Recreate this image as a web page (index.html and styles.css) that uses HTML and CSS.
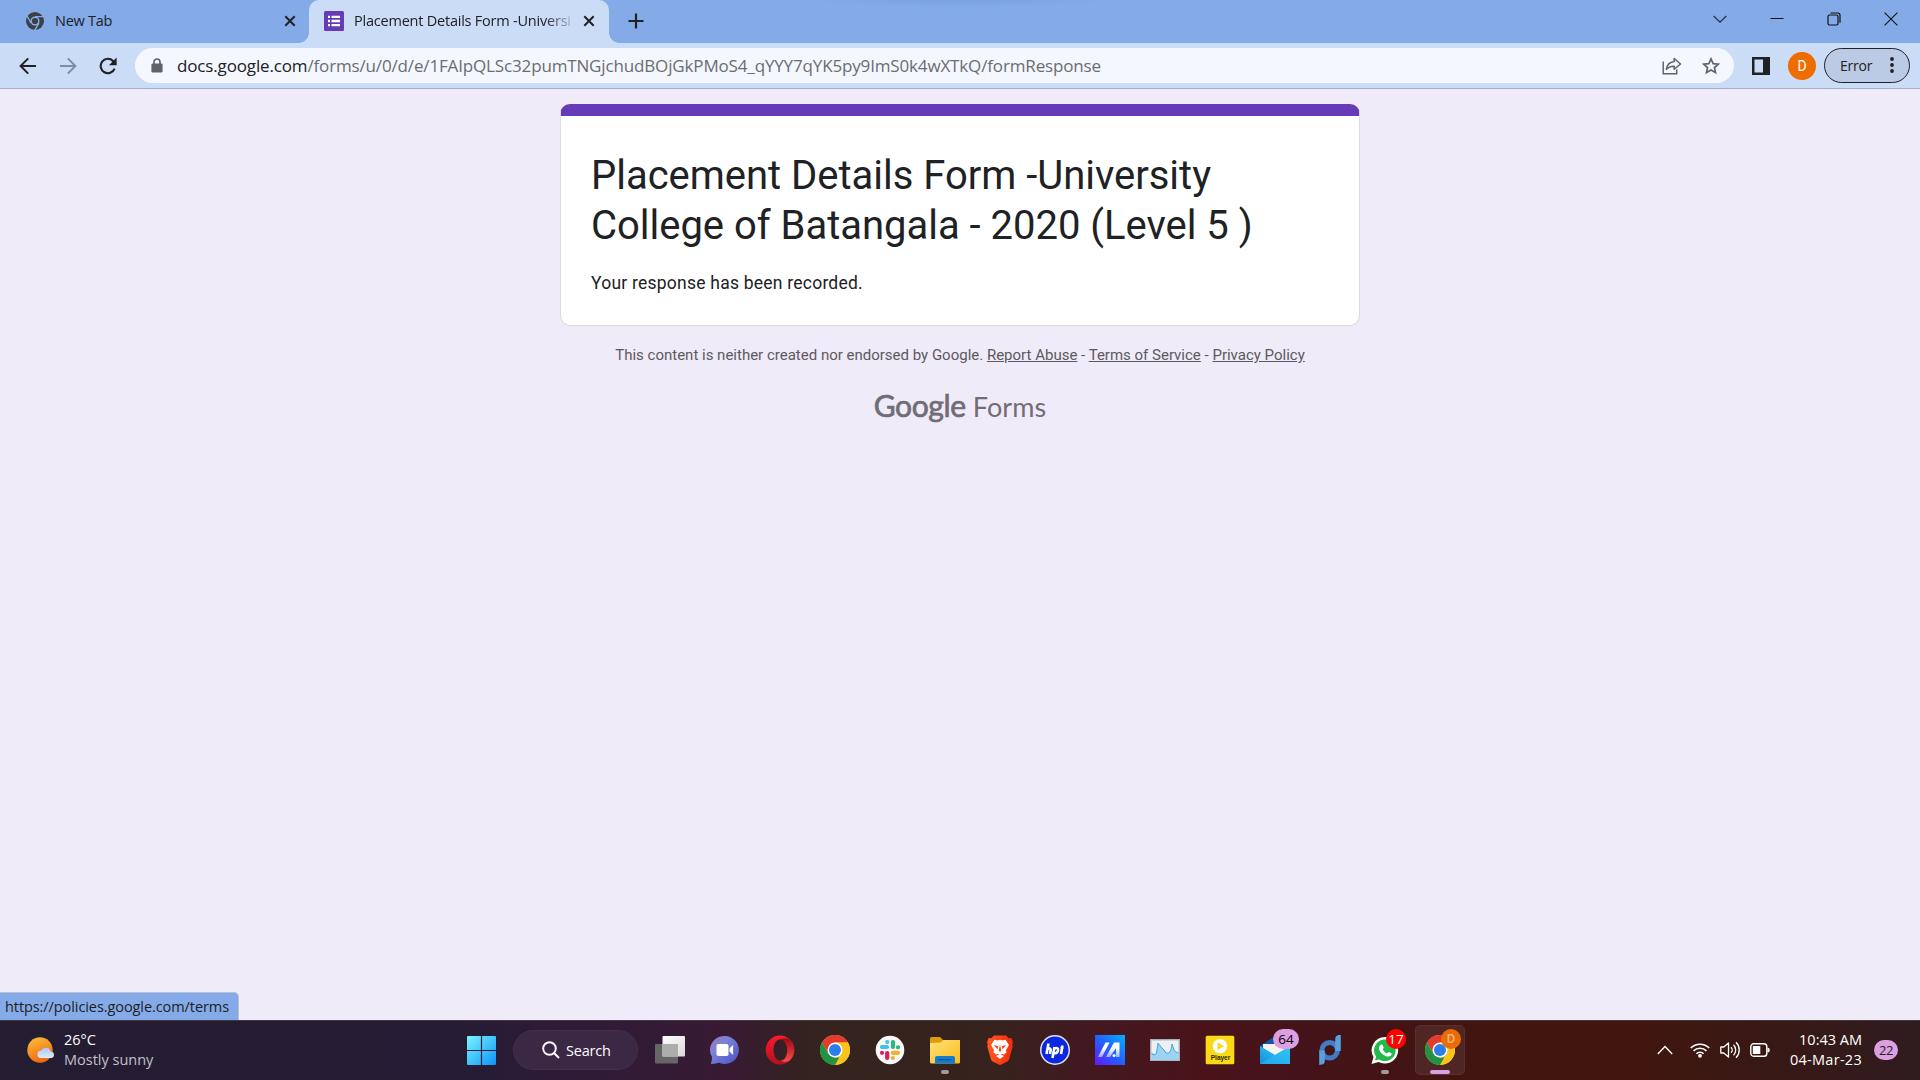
FILE: index.html
```html
<!DOCTYPE html>
<html lang="en">
<head>
<meta charset="utf-8">
<title>Placement Details Form -University College of Batangala - 2020 (Level 5 )</title>
<link rel="stylesheet" href="styles.css">
</head>
<body>
<div class="screen">
  <header class="tabstrip">
    <div class="tab tab-idle">
      <svg class="favicon" viewBox="0 0 20 20"><circle cx="10" cy="10" r="9" fill="#3c4043"/><circle cx="10" cy="10" r="4.6" fill="#84abe8"/><circle cx="10" cy="10" r="3.1" fill="#3c4043"/><path d="M10 5.6h8.3M6.1 12.2L2 5M13.9 12.2L9.6 19.4" stroke="#84abe8" stroke-width="1.4"/></svg>
      <span class="tab-title">New Tab</span>
      <svg class="tab-close" viewBox="0 0 12 12"><path d="M1.3 1.3l9.4 9.4M10.7 1.3L1.3 10.7" stroke="#202124" stroke-width="2"/></svg>
    </div>
    <div class="tab tab-active">
      <svg class="favicon" viewBox="0 0 20 20"><rect width="20" height="20" rx="1.5" fill="#673ab7"/><path d="M4 5.9h2M4 10h2M4 14.1h2M7.5 5.9H16M7.5 10H16M7.5 14.1H16" stroke="#fff" stroke-width="2.4"/></svg>
      <span class="tab-title faded">Placement Details Form -Universi</span>
      <svg class="tab-close" viewBox="0 0 12 12"><path d="M1.3 1.3l9.4 9.4M10.7 1.3L1.3 10.7" stroke="#202124" stroke-width="2"/></svg>
    </div>
    <svg class="new-tab" viewBox="0 0 16 16"><path d="M8 .5v15M.5 8h15" stroke="#202124" stroke-width="2.2"/></svg>
    <div class="window-buttons">
      <svg viewBox="0 0 14 14"><path d="M.7 4l6.3 6.2L13.3 4" fill="none" stroke="#1b2a40" stroke-width="1.1"/></svg>
      <svg viewBox="0 0 14 14"><path d="M.5 6.5h13" stroke="#111" stroke-width="1"/></svg>
      <svg viewBox="0 0 14 14"><rect x="1" y="3" width="10" height="10" rx="1.5" fill="none" stroke="#111" stroke-width="1.2"/><path d="M3.5 1h7.3Q13 1 13 3.2v7.6" fill="none" stroke="#111" stroke-width="1.2"/></svg>
      <svg viewBox="0 0 14 14"><path d="M.6 .6l12.8 12.8M13.4 .6L.6 13.4" stroke="#111" stroke-width="1.1"/></svg>
    </div>
  </header>

  <div class="toolbar">
    <div class="nav">
      <svg viewBox="0 0 18 18"><path d="M17 9H2M9.2 1.4L1.6 9l7.6 7.6" fill="none" stroke="#202124" stroke-width="2"/></svg>
      <svg viewBox="0 0 18 18"><path d="M1 9h15M8.8 1.4L16.4 9l-7.6 7.6" fill="none" stroke="#7d8da9" stroke-width="2"/></svg>
      <svg viewBox="0 0 18 18"><path d="M15.6 11.6A7.2 7.2 0 1 1 14 3.9l2 2" fill="none" stroke="#202124" stroke-width="2.1"/><path d="M17.6 .6v7.6H10z" fill="#202124"/></svg>
    </div>
    <div class="omnibox">
      <svg class="lock" viewBox="0 0 12 15"><path d="M3 6V4a3 3 0 0 1 6 0v2" fill="none" stroke="#5f6368" stroke-width="1.7"/><rect x=".4" y="5.4" width="11.2" height="9.2" rx="1.4" fill="#5f6368"/></svg>
      <span class="url">docs.google.com<span class="path">/forms/u/0/d/e/1FAIpQLSc32pumTNGjchudBOjGkPMoS4_qYYY7qYK5py9ImS0k4wXTkQ/formResponse</span></span>
      <svg class="share" viewBox="0 0 20 18"><path d="M1.2 4.5V16.7H14.7V12.5" fill="none" stroke="#5f6368" stroke-width="1.5"/><path d="M12.2 1.5L18.5 7l-6.3 5.3V9.2C8.7 9.1 6.2 10 4.4 12.4 4.9 8.2 7.6 5.2 12.2 4.6z" fill="none" stroke="#5f6368" stroke-width="1.5" stroke-linejoin="round"/></svg>
      <svg class="star" viewBox="0 0 18 18"><path d="M9 1.900l2.150 4.700 5.100.55-3.800 3.450 1.050 5.050L9 13.100l-4.500 2.550 1.050-5.050-3.800-3.450 5.100-.55z" fill="none" stroke="#5f6368" stroke-width="1.7"/></svg>
    </div>
    <svg class="panel-icon" viewBox="0 0 18 18"><path d="M0 0h18v18H0zM2.500 2.500v13h8.500v-13z" fill="#202124" fill-rule="evenodd"/></svg>
    <span class="avatar">D</span>
    <div class="error-chip"><span>Error</span><svg viewBox="0 0 4 16"><circle cx="2" cy="2" r="1.9"/><circle cx="2" cy="8" r="1.9"/><circle cx="2" cy="14" r="1.9"/></svg></div>
  </div>

  <main class="page">
    <section class="card">
      <h1>Placement Details Form -University<br>College of Batangala - 2020 (Level 5 )</h1>
      <p>Your response has been recorded.</p>
    </section>
    <div class="disclaimer">This content is neither created nor endorsed by Google. <a>Report Abuse</a> - <a>Terms of Service</a> - <a>Privacy Policy</a></div>
    <div class="brand"><span class="brand-google">Google</span><span class="brand-forms">Forms</span></div>
    <div class="link-status">https://policies.google.com/terms</div>
  </main>

  <footer class="taskbar">
    <div class="weather">
      <svg viewBox="0 0 28 26"><defs><linearGradient id="sun" x1="0" y1="0" x2=".4" y2="1"><stop offset="0" stop-color="#fcc23c"/><stop offset="1" stop-color="#f06a12"/></linearGradient><linearGradient id="cloud" x1="0" y1="0" x2="0" y2="1"><stop offset="0" stop-color="#a9cbf3"/><stop offset="1" stop-color="#dce9fa"/></linearGradient></defs><circle cx="13" cy="13" r="12.700" fill="url(#sun)"/><path d="M14 21a3.700 3.700 0 0 1 .3-7.400A5 5 0 0 1 23.600 14.500 3.300 3.300 0 0 1 24.500 21z" fill="url(#cloud)"/></svg>
      <div class="weather-text"><span>26°C</span><span class="weather-sub">Mostly sunny</span></div>
    </div>
    <div class="apps">
      <svg class="start" viewBox="0 0 29 29"><defs><linearGradient id="win" x1="0" y1="0" x2="1" y2="1"><stop offset="0" stop-color="#7df4ff"/><stop offset="1" stop-color="#0a93f8"/></linearGradient></defs><path d="M0 1Q0 0 1 0h12.900v13.900H0zM15.100 0H28q1 0 1 1v12.900H15.100zM0 15.100h13.900V29H1q-1 0-1-1zM15.100 15.100H29V28q0 1-1 1H15.100z" fill="url(#win)"/></svg>
      <div class="search"><svg viewBox="0 0 18 18"><circle cx="7.500" cy="7.500" r="6.300" fill="none" stroke="#fff" stroke-width="1.900"/><path d="M12 12l5 5" stroke="#fff" stroke-width="2"/></svg><span>Search</span></div>
      <div class="app"><svg viewBox="0 0 30 30"><defs><linearGradient id="tv" x1="0" y1="0" x2="1" y2="1"><stop offset="0" stop-color="#fff"/><stop offset="1" stop-color="#d9d9d9"/></linearGradient></defs><rect y="9" width="23" height="19.500" rx="1" fill="#666"/><rect x="7.500" y="1" width="22.500" height="20.500" rx="1" fill="url(#tv)"/><path d="M7.500 9H23v12.500H7.500z" fill="#adadad"/></svg></div>
      <div class="app"><svg viewBox="0 0 30 30"><defs><linearGradient id="chat" x1="0" y1="0" x2="1" y2="1"><stop offset="0" stop-color="#a272b8"/><stop offset=".35" stop-color="#7a83d6"/><stop offset="1" stop-color="#4a4fc4"/></linearGradient></defs><path d="M15 1a14 14 0 1 1-6 26.700Q5 29 .8 29q1.200-3 1.200-7A14 14 0 0 1 15 1z" fill="url(#chat)"/><rect x="6.500" y="9" width="12" height="12" rx="1.800" fill="#fff"/><path d="M19.600 13.200l3.500-3.200v10l-3.500-3.200z" fill="#fff"/></svg></div>
      <div class="app"><svg viewBox="0 0 30 30"><defs><linearGradient id="op" x1="0" y1="0" x2="0" y2="1"><stop offset="0" stop-color="#ff1b2d"/><stop offset="1" stop-color="#b30f1e"/></linearGradient><linearGradient id="op2" x1="0" y1="0" x2="0" y2="1"><stop offset="0" stop-color="#9c0813"/><stop offset="1" stop-color="#ff4b4b"/></linearGradient></defs><path d="M15 .5a14.300 14.500 0 1 0 0 29 14.300 14.500 0 1 0 0-29zM15.500 4.200c4 0 6.800 4.700 6.800 10.800s-2.800 10.800-6.800 10.800S8.500 21.100 8.500 15s3-10.800 7-10.800z" fill="url(#op)" fill-rule="evenodd"/><path d="M15.500 4.200c4-1.800 7-1 9.200.2a14.300 14.500 0 0 1 0 21.200c-2.700 1.700-6 1.800-9.200.2 4 0 6.800-4.700 6.800-10.800S19.500 4.200 15.500 4.200z" fill="url(#op2)"/></svg></div>
      <div class="app"><svg viewBox="0 0 30 30"><g id="chrome"><circle cx="15" cy="15" r="15" fill="#fcc31e"/><path d="M2 7.500A15 15 0 0 1 28 7.500H15L8.500 18.800z" fill="#e33b2e"/><path d="M2 7.500l6.500 11.300L15 22.500h6.500L15 30A15 15 0 0 1 2 7.500z" fill="#229342"/><path d="M21.500 18.800L15 30a15 15 0 0 0 13-22.500H15z" fill="#fcc31e"/><circle cx="15" cy="15" r="7.500" fill="#fff"/><circle cx="15" cy="15" r="6" fill="#2b7de9"/></g></svg></div>
      <div class="app"><svg viewBox="0 0 30 30"><circle cx="15" cy="15" r="14.300" fill="#f8f8f8"/><g stroke-width="4.200" stroke-linecap="round"><path d="M7 12h5M12.300 7v0" stroke="#36c5f0"/><path d="M18 7v5M23 12.300h0" stroke="#2eb67d"/><path d="M18 17.800h5M17.900 23h0" stroke="#ecb22e"/><path d="M12.200 18v5M7 17.800h0" stroke="#e01e5a"/></g></svg></div>
      <div class="app"><svg viewBox="0 0 30 30"><defs><linearGradient id="fold" x1="0" y1="0" x2="1" y2="1"><stop offset="0" stop-color="#ffe07a"/><stop offset="1" stop-color="#fbbc1a"/></linearGradient></defs><path d="M0 3.500Q0 2 1.500 2H10l3 3v6H0z" fill="#dd9c08"/><path d="M0 8l11-.5 2-2.500h17v22q0 1.500-1.500 1.500h-27Q0 28.500 0 27z" fill="url(#fold)"/><path d="M5 28.500V23q0-2 2-2h16q2 0 2 2v5.500z" fill="#127cd0"/><path d="M8.500 24.700h13" stroke="#0b4f93" stroke-width="1.200"/></svg><i class="running"></i></div>
      <div class="app"><svg viewBox="0 0 30 30"><defs><linearGradient id="br"><stop offset="0" stop-color="#ff5a1f"/><stop offset="1" stop-color="#f8280b"/></linearGradient></defs><path d="M9 .4h12l2.800 2.800 2.500-.3 1.700 4-.7 2.500.4 2-3.700 13q-.4 1.200-1.500 2L15 30l-7.500-3.600q-1.100-.8-1.500-2L2.300 11.400l.4-2L2 6.900l1.700-4 2.500.3z" fill="url(#br)"/><path d="M9.500 4.800l3 .8 2.500-.8 2.500.8 3-.8 3.500 5.200-3 5 .5 2.500-3 2.300-1-1-2.500 1.200-2.500-1.200-1 1-3-2.300.500-2.500-3-5zM11 21l4-2 4 2-4 3z" fill="#fff"/><path d="M8.700 10l4.600 1.300-.8 3zM21.300 10l-4.600 1.300.8 3zM15 9.500l1.300 6-1.300 1.600-1.300-1.600z" fill="#f64a1b"/></svg></div>
      <div class="app"><svg viewBox="0 0 30 30"><circle cx="15" cy="15" r="15" fill="#dfe3f3"/><circle cx="15" cy="15" r="13.500" fill="#0b27e0"/><path d="M8.500 8.500L6.500 19M7.300 14q3.200-1.500 3.400.8L10 19M14.500 12l-2 11M14 13.500q5-1.500 4 2.200-1 3.500-4.600 2.300M22.500 10.500L21 19M20.500 13l3-.5" fill="none" stroke="#fff" stroke-width="2.600" stroke-linejoin="round"/></svg></div>
      <div class="app"><svg viewBox="0 0 30 30"><defs><linearGradient id="ma" x1="0" y1="1" x2="1" y2="0"><stop offset="0" stop-color="#6417ff"/><stop offset=".5" stop-color="#2361ff"/><stop offset="1" stop-color="#00b2ff"/></linearGradient><linearGradient id="ma2" x1="0" y1="1" x2="0" y2="0"><stop offset="0" stop-color="#fff" stop-opacity=".5"/><stop offset=".6" stop-color="#fff"/></linearGradient></defs><path d="M0 0h30v30H0z" fill="url(#ma)"/><path d="M3 22L10.500 7.500h4L7 22zM11 22L19 7.500H24.500V22H21V13L15 22z" fill="url(#ma2)"/><circle cx="19" cy="20.500" r="1.500" fill="#fff"/></svg></div>
      <div class="app"><svg viewBox="0 0 30 30"><rect x=".7" y="4.700" width="28.600" height="20.600" fill="#eef1f4" stroke="#a6aeb8" stroke-width="1.400"/><path d="M1.500 24.500V17l3 2 2-1L8 8l3 4 3 3 2 3 3 0 2-3 1-6 2 6 2 2 2.500 1v7.500z" fill="#9dd3f2"/><path d="M1.500 19l3 1 2-2L8 8l3 4 3 3 2 3 3 0 2-3 1-6 2 6 2 2 2.500 1" fill="none" stroke="#48a5dc"/></svg></div>
      <div class="app"><svg viewBox="0 0 30 30"><rect x=".7" y=".7" width="28.600" height="28.600" rx="1.500" fill="#fbd914"/><circle cx="15" cy="11.200" r="7.200" fill="#fff"/><path d="M12.500 7.300l6.500 3.900-6.500 3.900z" fill="#fbd914"/><text class="player-word" x="15.500" y="25.300" text-anchor="middle">Player</text></svg></div>
      <div class="app"><svg viewBox="0 0 30 30"><defs><linearGradient id="ml" x1="0" y1="1" x2="1" y2="0"><stop offset="0" stop-color="#1490df"/><stop offset="1" stop-color="#35cdf8"/></linearGradient></defs><path d="M0 11L15 1l15 10v7H0z" fill="#0e57a8"/><path d="M3 9h24v6l-12 8-12-8z" fill="#f3f3f3"/><path d="M0 11l15 9 15-9v18H0z" fill="url(#ml)"/><path d="M0 29L30 11v18z" fill="#2eb9f2" opacity=".55"/></svg><b class="badge badge-mail">64</b></div>
      <div class="app"><svg viewBox="0 0 30 30"><circle cx="14.700" cy="15.300" r="7.800" fill="none" stroke="#427cc8" stroke-width="5"/><path d="M4.200 30V15.500h5.600V26q0 3-3 3.600zM25.800 0v16h-5.600V4q0-3 3-4z" fill="#5a9edb"/></svg></div>
      <div class="app"><svg viewBox="0 0 30 30"><path d="M15 2A13.300 13.300 0 1 1 8.500 27L1.500 29l2-7A13.300 13.300 0 0 1 15 2z" fill="#fff"/><path d="M15 4.500A10.800 10.800 0 1 1 9 24.400L5 25.500l1.100-4A10.800 10.800 0 0 1 15 4.500z" fill="#23b94d"/><path d="M11.200 9.500c.8-.3 1.200 0 1.500.7l.9 2.200c.2.500-.9 1.500-1 1.800.9 2 2.400 3.300 4.500 4.200.5-.2 1.300-1.600 1.800-1.400l2.300 1.200c.8.4.2 2-.5 2.600-1.500 1.200-3.400.9-5.300.1-3-1.300-5.200-3.600-6.200-6.200-.7-2 .2-4.400 2-5.200z" fill="#fff"/></svg><b class="badge badge-wa">17</b><i class="running"></i></div>
      <div class="app app-current"><svg viewBox="0 0 30 30"><use href="#chrome"/></svg><b class="badge badge-profile">D</b><i class="running current"></i></div>
    </div>
    <div class="tray">
      <svg class="chev" viewBox="0 0 16 10"><path d="M.8 9L8 1.500 15.200 9" fill="none" stroke="#fff" stroke-width="1.300"/></svg>
      <svg class="wifi" viewBox="0 0 20 16"><g fill="none" stroke="#fff" stroke-width="1.600"><path d="M.8 6a13 13 0 0 1 18.400 0M3.600 8.900a9 9 0 0 1 12.800 0M6.400 11.700a5.100 5.100 0 0 1 7.200 0"/></g><circle cx="10" cy="13.800" r="1.900" fill="#fff"/></svg>
      <svg class="volume" viewBox="0 0 20 18"><g fill="none" stroke="#fff" stroke-width="1.300"><path d="M.8 6v6h3l4.700 4V2L3.800 6z" stroke-linejoin="round"/><path d="M11 6.200a4 4 0 0 1 0 5.600M13.500 3.800a7.300 7.300 0 0 1 0 10.400M16 1.200a11 11 0 0 1 0 15.600"/></g></svg>
      <svg class="battery" viewBox="0 0 20 14"><rect x=".8" y=".8" width="16" height="12.400" rx="2.800" fill="none" stroke="#fff" stroke-width="1.400"/><rect x="2.800" y="3" width="7.500" height="8" fill="#fff"/><path d="M17.500 4.500q2.300 0 2.300 2.500t-2.300 2.500z" fill="#fff"/></svg>
      <div class="clock"><span>10:43 AM</span><span class="date">04-Mar-23</span></div>
      <span class="notif">22</span>
    </div>
  </footer>
</div>
</body>
</html>
```
FILE: styles.css
```css
* { box-sizing: border-box; }
body { margin: 0; }
svg { display: block; flex: none; }
.screen { width: 1920px; height: 1080px; display: flex; flex-direction: column; overflow: hidden; font-family: "Open Sans", "Noto Sans", sans-serif; color: #202124; white-space: nowrap; }

.tabstrip { height: 43px; flex: none; display: flex; background: radial-gradient(ellipse 150px 7px at 960px 0, #79a1dd, #84abe8); }
.tab { display: flex; align-items: center; height: 43px; font-size: 14.5px; letter-spacing: -.27px; }
.tab-idle { width: 309px; padding: 0 13px 2px 25px; }
.tab-active { position: relative; width: 300px; padding: 0 14px 2px 15px; background: #cbdcf7; border-radius: 10px 10px 0 0; }
.tab-active::before, .tab-active::after { content: ""; position: absolute; bottom: 0; width: 10px; height: 10px; }
.tab-active::before { left: -10px; background: radial-gradient(circle at 0 0, transparent 9.5px, #cbdcf7 10px); }
.tab-active::after { right: -10px; background: radial-gradient(circle at 100% 0, transparent 9.5px, #cbdcf7 10px); }
.favicon { width: 20px; height: 20px; margin-right: 10px; }
.faded { font-size: 14.5px; letter-spacing: -.22px; -webkit-mask-image: linear-gradient(90deg, #000 190px, transparent 224px); mask-image: linear-gradient(90deg, #000 190px, transparent 224px); }
.tab-close { width: 12px; height: 12px; margin-left: auto; }
.new-tab { width: 16px; height: 16px; margin: 13px 0 0 19px; }
.window-buttons { display: flex; gap: 43px; margin: 12px 22px 0 auto; }
.window-buttons svg { width: 14px; height: 14px; }

.toolbar { height: 46px; flex: none; display: flex; align-items: center; background: #cbdcf7; border-bottom: 1px solid #a4adc8; padding: 0 10px 0 18px; }
.nav { display: flex; gap: 22px; width: 117px; padding-left: 1px; }
.nav svg { width: 18px; height: 18px; }
.omnibox { display: flex; align-items: center; width: 1599px; height: 35px; border-radius: 18px; background: #f4f7fd; padding: 0 14px 0 16px; font-size: 17px; }
.url { letter-spacing: -.15px; }
.lock { width: 12px; height: 15px; margin-right: 14px; }
.path { color: #6a6d72; }
.share { width: 20px; height: 18px; margin: 0 20px 0 auto; }
.star { width: 18px; height: 18px; }
.panel-icon { width: 18px; height: 18px; margin-left: 18px; }
.avatar { width: 28px; height: 28px; margin-left: 18px; border-radius: 50%; background: #ef6c00; color: #fff; font: 14px/28px Roboto, sans-serif; text-align: center; }
.error-chip { display: flex; align-items: center; justify-content: space-between; width: 86px; height: 35px; margin-left: 8px; padding: 0 15px 1px; border: 1px solid #202124; border-radius: 18px; background: #bccbe5; font-size: 14px; letter-spacing: -.2px; }
.error-chip svg { width: 4px; height: 16px; fill: #202124; }

.page { position: relative; flex: 1; background: #f0ebf8; display: flex; flex-direction: column; align-items: center; padding-top: 15px; font-family: Roboto, sans-serif; }
.card { width: 800px; height: 222px; flex: none; background: #fff; border: 1px solid #dadce0; border-top: 12px solid #673ab7; border-radius: 10px; padding: 35px 30px 0; }
h1 { margin: 0; font-size: 40px; line-height: 50px; font-weight: 400; letter-spacing: -.02px; }
.card p { margin: 20px 0 0; font-size: 17.5px; line-height: 25px; letter-spacing: .23px; }
.disclaimer { margin-top: 20px; font-size: 15px; line-height: 18px; color: #5c5960; }
.disclaimer a { text-decoration: underline; }
.brand { display: flex; align-items: baseline; gap: 7px; margin-top: 23px; color: #706d76; line-height: 36px; }
.brand-google { font: 30px/36px Lato, sans-serif; letter-spacing: -.35px; -webkit-text-stroke: .7px #706d76; }
.brand-forms { font: 27px/36px Lato, sans-serif; letter-spacing: .1px; }
.link-status { position: absolute; left: 0; bottom: 0; width: 239px; height: 28px; padding-left: 5px; border: 1px solid #b9bfd4; border-width: 1px 1px 0 0; border-radius: 0 5px 0 0; background: #84abe8; font: 14.5px/27px "Open Sans", sans-serif; letter-spacing: -.08px; }

.taskbar { height: 60px; flex: none; display: flex; align-items: center; padding-bottom: 1px; border-top: 1px solid #45393f; color: #fff; font-size: 14.5px; background: linear-gradient(90deg, #241c31 0, #241c34 450px, #2f1b37 580px, #381a32 730px, #34231f 810px, #37221d 1000px, #421920 1080px, #4a131a 1200px, #44131a 1300px, #42150f 1490px, #42160e 1620px, #391813 1750px, #2f1b1f 1920px); }
.weather { display: flex; gap: 9px; align-items: center; width: 440px; padding-left: 27px; }
.weather svg { width: 28px; height: 26px; }
.weather-text, .clock { display: flex; flex-direction: column; line-height: 20px; padding-bottom: 1px; }
.weather-sub { color: #c4c0c8; }
.apps { display: flex; align-items: center; height: 58px; padding-left: 27px; }
.start { width: 29px; height: 29px; }
.search { display: flex; align-items: center; gap: 6px; width: 125px; height: 40px; margin: 0 7px 0 17px; padding-left: 28px; border-radius: 20px; background: #3b2845; border: 1px solid #423049; letter-spacing: -.2px; }
.search svg { width: 18px; height: 18px; }
.app { position: relative; display: flex; align-items: center; justify-content: center; width: 50px; height: 50px; margin-right: 5px; }
.app svg { width: 30px; height: 30px; }
.app-current { border: 1px solid #5a302c; border-radius: 5px; background: #4f2623; }
.running { position: absolute; left: 21px; bottom: 1px; width: 8px; height: 4px; border-radius: 2px; background: #a59a99; }
.running.current { left: 14px; bottom: 0; width: 20px; background: #dc9fe2; }
.badge { position: absolute; height: 20px; border-radius: 10px; font-weight: 400; line-height: 20px; text-align: center; font-size: 13.5px; }
.badge-mail { left: 23px; top: 4px; width: 26px; background: #dc9fe2; color: #000; }
.badge-wa { left: 26px; top: 4px; width: 20px; background: #f00; }
.badge-profile { left: 25px; top: 3px; width: 20px; background: #e96c06; color: #fbb77f; font-family: Roboto, sans-serif; font-weight: 500; font-size: 13px; }
.player-word { font: bold 6.5px "Liberation Sans", sans-serif; fill: #2c2503; }
.tray { display: flex; align-items: center; margin-left: auto; padding-right: 22px; }
.chev { width: 16px; height: 10px; margin-right: 17px; }
.wifi { width: 20px; height: 16px; margin-right: 10px; }
.volume { width: 20px; height: 18px; margin-right: 10px; }
.battery { width: 20px; height: 14px; margin-right: 20px; }
.clock { align-items: flex-end; }
.date { letter-spacing: .28px; }
.notif { width: 24px; height: 20px; margin-left: 12px; border-radius: 10px; background: #dc9fe2; color: #222; font-size: 13px; letter-spacing: -.5px; line-height: 20px; text-align: center; }
```
